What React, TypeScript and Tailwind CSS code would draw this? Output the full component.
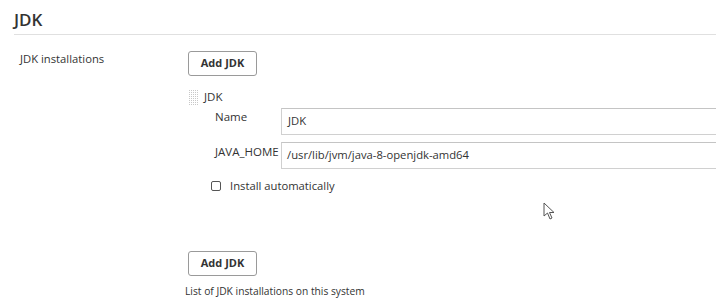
import React from 'react';

function AddButton() {
  return (
    <button
      type="button"
      className="h-[25px] w-[69px] rounded-[3px] border border-[#9a9a9a] bg-white text-[11px] font-bold text-[#333]"
    >
      Add JDK
    </button>
  );
}

function DragHandle() {
  return (
    <svg width="10" height="16" viewBox="0 0 10 16" className="block">
      <defs>
        <pattern id="dots" width="2" height="2" patternUnits="userSpaceOnUse">
          <rect width="1" height="1" fill="#c8c8c8" />
        </pattern>
      </defs>
      <rect width="10" height="16" fill="url(#dots)" />
    </svg>
  );
}

function Cursor() {
  return (
    <svg width="13" height="19" viewBox="0 0 13 19" className="absolute left-[543px] top-[202px]">
      <path
        d="M1 1 L1 14 L4.5 11 L7 17 L9 16 L6.5 10.5 L11 10.5 Z"
        fill="white"
        stroke="#555"
        strokeWidth="1"
        strokeLinejoin="round"
      />
    </svg>
  );
}

export default function App() {
  return (
    <div
      className="relative h-[306px] w-[716px] overflow-hidden bg-white text-[#333]"
      style={{ fontFamily: '"Open Sans", "Noto Sans", sans-serif' }}
    >
      <div className="pl-[14px] pt-[9px]">
        <h2 className="border-b border-[#e0e0e0] pb-[3px] text-[17px] font-semibold leading-[22px]">JDK</h2>
      </div>

      <div className="flex pt-[14px]">
        <div className="w-[188px] shrink-0 pl-[20px] pt-[2px] text-[11.25px] leading-[16px]">JDK installations</div>

        <div className="flex-1">
          <AddButton />

          <div className="mt-[14px] flex items-start gap-[5px] pl-[1px]">
            <DragHandle />
            <span className="text-[11.5px] leading-[14px]">JDK</span>
          </div>

          <div className="mt-[2px] pl-[27px]">
            <div className="flex items-start">
              <label className="w-[66px] shrink-0 pt-[1px] text-[11.5px] leading-[16px]">Name</label>
              <div className="-mr-[10px] flex h-[27px] flex-1 items-center border border-[#d0d0d0] border-t-[#c4c4c4] pl-[6px] text-[11.25px]">
                JDK
              </div>
            </div>

            <div className="mt-[7px] flex items-start">
              <label className="w-[66px] shrink-0 pt-[2px] text-[11.5px] leading-[16px]">JAVA_HOME</label>
              <div className="-mr-[10px] flex h-[27px] flex-1 items-center border border-[#d0d0d0] border-t-[#c4c4c4] pl-[5px] text-[11.25px]">
                /usr/lib/jvm/java-8-openjdk-amd64
              </div>
            </div>
          </div>

          <div className="mt-[10px] flex items-center gap-[9px] pl-[23px]">
            <span className="block h-[10px] w-[10px] rounded-[2px] border border-[#555] bg-white" />
            <span className="text-[11.25px] leading-[14px]">Install automatically</span>
          </div>

          <div className="mt-[56px]">
            <AddButton />
          </div>

          <div className="mt-[8px] -ml-[3px] text-[10.25px] leading-[14px]">List of JDK installations on this system</div>
        </div>
      </div>

      <Cursor />
    </div>
  );
}
